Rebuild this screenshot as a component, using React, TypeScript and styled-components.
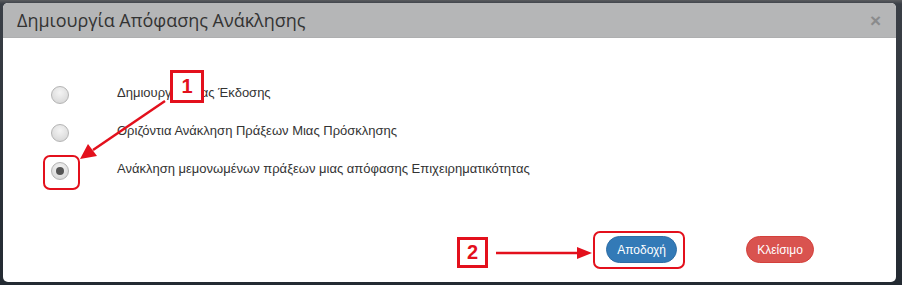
import styled, { createGlobalStyle } from "styled-components";

const GlobalStyle = createGlobalStyle`
  html, body {
    margin: 0;
    padding: 0;
    background: #2b3038;
  }
  body {
    font-family: "Liberation Sans", Arial, sans-serif;
  }
`;

const Backdrop = styled.div`
  width: 902px;
  height: 285px;
  padding: 3px 6px 3px 3px;
  box-sizing: border-box;
  background: linear-gradient(180deg, #5a5c5f 0px, #3a3f46 4px, #232a32 100%);
`;

const Modal = styled.div`
  position: relative;
  height: 100%;
  background: #fff;
  border-radius: 5px;
  overflow: hidden;
  display: flex;
  flex-direction: column;
`;

const Header = styled.div`
  height: 35px;
  display: flex;
  align-items: center;
  justify-content: space-between;
  padding: 0 14px;
  background: #b5b6b7;
  border-bottom: 1px solid #aeafb0;
  box-sizing: border-box;
`;

const Title = styled.h4`
  margin: 0;
  font-family: "Open Sans", "Liberation Sans", sans-serif;
  font-weight: 400;
  font-size: 18px;
  color: #333;
`;

const Close = styled.span`
  font-family: "Liberation Sans", Arial, sans-serif;
  font-size: 19px;
  font-weight: bold;
  color: #8a8b8c;
  line-height: 1;
  margin-right: 1px;
`;

const Body = styled.div`
  padding: 38px 0 0 48px;
  display: flex;
  flex-direction: column;
`;

const Row = styled.label`
  height: 38px;
  display: flex;
  align-items: center;
  gap: 48px;
`;

const Radio = styled.span<{ $checked?: boolean }>`
  width: 18px;
  height: 18px;
  border-radius: 50%;
  box-sizing: border-box;
  border: 1px solid #b4b4b4;
  background: radial-gradient(circle at 50% 35%, #f4f4f4 0%, #e0e0e0 60%, #cfcfcf 100%);
  display: flex;
  align-items: center;
  justify-content: center;

  &::after {
    content: "";
    width: 8px;
    height: 8px;
    border-radius: 50%;
    background: #555;
    display: ${(p) => (p.$checked ? "block" : "none")};
  }
`;

const Label = styled.span`
  font-size: 13px;
  color: #333;
  margin-bottom: 6px;
`;

const Footer = styled.div`
  display: flex;
  justify-content: flex-end;
  gap: 69px;
  margin-top: 46px;
  padding-right: 82px;
`;

const Button = styled.button<{ $tone: "primary" | "danger" }>`
  height: 27px;
  padding: 0 10px;
  border: 1px solid ${(p) => (p.$tone === "primary" ? "#2e6da4" : "#d43f3a")};
  border-radius: 14px;
  background: ${(p) => (p.$tone === "primary" ? "#337ab7" : "#d9534f")};
  color: #fff;
  font-family: "Liberation Sans", Arial, sans-serif;
  font-size: 12px;
  min-width: 68px;
`;

const Callout = styled.div<{ $x: number; $y: number; $w: number; $h: number }>`
  position: absolute;
  left: ${(p) => p.$x}px;
  top: ${(p) => p.$y}px;
  width: ${(p) => p.$w}px;
  height: ${(p) => p.$h}px;
  box-sizing: border-box;
  border: 3px solid #e3101c;
  background: #fff;
  color: #e3101c;
  font-family: "Liberation Sans", Arial, sans-serif;
  font-weight: bold;
  font-size: 20px;
  display: flex;
  align-items: center;
  justify-content: center;
`;

const Highlight = styled.div<{ $x: number; $y: number; $w: number; $h: number }>`
  position: absolute;
  left: ${(p) => p.$x}px;
  top: ${(p) => p.$y}px;
  width: ${(p) => p.$w}px;
  height: ${(p) => p.$h}px;
  box-sizing: border-box;
  border: 2px solid #e3101c;
  border-radius: 7px;
`;

const Arrows = styled.svg`
  position: absolute;
  left: 0;
  top: 0;
  pointer-events: none;
`;

const options = [
  { text: "Δημιουργία Νέας Έκδοσης", checked: false },
  { text: "Οριζόντια Ανάκληση Πράξεων Μιας Πρόσκλησης", checked: false },
  { text: "Ανάκληση μεμονωμένων πράξεων μιας απόφασης Επιχειρηματικότητας", checked: true },
];

export default function App() {
  return (
    <>
      <GlobalStyle />
      <Backdrop>
        <Modal>
          <Header>
            <Title>Δημιουργία Απόφασης Ανάκλησης</Title>
            <Close>×</Close>
          </Header>
          <Body>
            {options.map((o) => (
              <Row key={o.text}>
                <Radio $checked={o.checked} />
                <Label>{o.text}</Label>
              </Row>
            ))}
          </Body>
          <Footer>
            <Button $tone="primary">Αποδοχή</Button>
            <Button $tone="danger">Κλείσιμο</Button>
          </Footer>

          <Arrows width="893" height="279" viewBox="0 0 893 279">
            <line x1="162" y1="98" x2="90" y2="147" stroke="#e3101c" strokeWidth="2.5" />
            <polygon points="77,156 85,141 94,153" fill="#e3101c" />
            <line x1="493" y1="250" x2="575" y2="250" stroke="#e3101c" strokeWidth="2.5" />
            <polygon points="589,250 574,244 574,256" fill="#e3101c" />
          </Arrows>
          <Highlight $x={40} $y={152} $w={37} $h={35} />
          <Highlight $x={590} $y={228} $w={92} $h={38} />
          <Callout $x={167} $y={67} $w={34} $h={33}>1</Callout>
          <Callout $x={454} $y={234} $w={31} $h={31}>2</Callout>
        </Modal>
      </Backdrop>
    </>
  );
}
